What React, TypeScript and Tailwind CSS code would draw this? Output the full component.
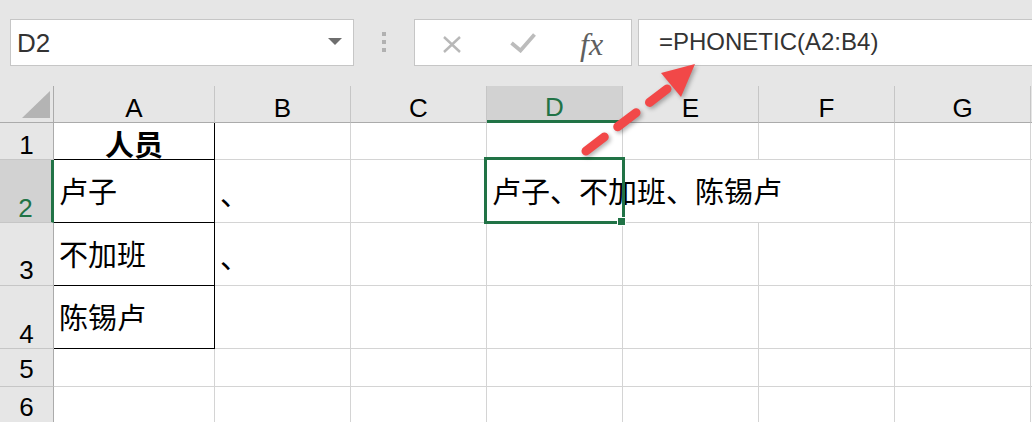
import React from "react";

const cols = [
  { id: "A", w: "w-[161px]" },
  { id: "B", w: "w-[136px]" },
  { id: "C", w: "w-[136px]" },
  { id: "D", w: "w-[136px]" },
  { id: "E", w: "w-[136px]" },
  { id: "F", w: "w-[136px]" },
  { id: "G", w: "w-[136px]" },
];

const rows = [
  { n: "1", h: "h-[37px]", num: "pb-[1px]" },
  { n: "2", h: "h-[63px]", num: "pb-[1px]" },
  { n: "3", h: "h-[63px]", num: "pb-[2px]" },
  { n: "4", h: "h-[63px]", num: "pb-[1px]" },
  { n: "5", h: "h-[38px]", num: "pb-[4px]" },
  { n: "6", h: "h-[37px]", num: "pb-[3px]" },
];

const data: Record<string, string> = {
  A1: "人员",
  A2: "卢子",
  A3: "不加班",
  A4: "陈锡卢",
  B2: "、",
  B3: "、",
  D2: "卢子、不加班、陈锡卢",
};

function BodyCell({ row, col }: { row: string; col: { id: string; w: string } }) {
  const key = col.id + row;
  const text = data[key];
  const boxed = col.id === "A" && Number(row) <= 4;
  const overflowed = row === "2" && (col.id === "D" || col.id === "E");

  let border = "border-r border-b border-[#d4d4d4]";
  if (boxed) border = "border-r border-b border-black";
  if (overflowed) border = "border-b border-[#d4d4d4]";

  let pad = "pl-[5px] pt-[19px]";
  if (key === "A1") pad = "pt-[9px] text-center font-bold";
  if (col.id === "B") pad = "pl-[5px] pt-[22px]";

  return (
    <div className={`relative shrink-0 ${col.w} ${border} ${pad}`}>
      {text && (
        <span className="block whitespace-nowrap text-[29px] leading-[29px] text-black">
          {text}
        </span>
      )}
      {key === "D2" && (
        <>
          <div className="absolute -left-[3px] -right-[2px] -top-[3px] -bottom-[2px] z-10 border-[3px] border-[#217346]" />
          <div className="absolute left-[130px] top-[57px] z-10 h-[9px] w-[9px] border border-white bg-[#217346]" />
        </>
      )}
    </div>
  );
}

export default function App() {
  return (
    <div className="relative h-[422px] w-[1032px] overflow-hidden bg-[#e6e6e6] font-['Liberation_Sans','Noto_Sans_CJK_SC',sans-serif]">
      {/* formula bar */}
      <div className="flex h-[86px] pl-[10px] pt-[19px]">
        <div className="flex h-[47px] w-[344px] shrink-0 items-start justify-between border border-[#c6c6c6] bg-white pl-[6px] pt-[10px]">
          <span className="text-[26px] leading-[26px] text-[#333]">D2</span>
          <svg width="14" height="8" viewBox="0 0 14 8" className="mr-[11px] mt-[8px]">
            <path d="M0 0 L14 0 L7 7 Z" fill="#6e6e6e" />
          </svg>
        </div>

        <div className="ml-[28px] mt-[13px] flex shrink-0 flex-col gap-[4px]">
          <div className="h-[4px] w-[4px] bg-[#b1b1b1]" />
          <div className="h-[4px] w-[4px] bg-[#b1b1b1]" />
          <div className="h-[4px] w-[4px] bg-[#b1b1b1]" />
        </div>

        <div className="ml-[28px] flex h-[47px] w-[218px] shrink-0 items-start border border-[#c6c6c6] bg-white pl-[27px]">
          <svg width="20" height="19" viewBox="0 0 20 19" className="mt-[15px]">
            <path d="M2 2 L18 17 M18 2 L2 17" stroke="#b8b8b8" strokeWidth="2.4" />
          </svg>
          <svg width="26" height="20" viewBox="0 0 26 20" className="ml-[48px] mt-[13px]">
            <path d="M1.5 10 L10.5 17.5 L24.5 1.5" stroke="#bcbcbc" strokeWidth="3.8" fill="none" />
          </svg>
          <span className="ml-[44px] mt-[8px] font-['Liberation_Serif',serif] text-[32px] italic leading-[32px] text-[#5f5f5f]">
            fx
          </span>
        </div>

        <div className="ml-[6px] h-[47px] w-[420px] shrink-0 border border-[#c6c6c6] bg-white pl-[20px] pt-[10px]">
          <span className="block text-[24px] leading-[24px] text-[#333]">=PHONETIC(A2:B4)</span>
        </div>
      </div>

      {/* column headers */}
      <div className="flex h-[37px]">
        <div className="relative w-[54px] shrink-0 border-r border-b border-r-[#ababab] border-b-[#ababab]">
          <svg width="54" height="37" className="absolute left-0 top-0">
            <path d="M22 32 L50 32 L50 5 Z" fill="#b4b4b4" />
          </svg>
        </div>
        {cols.map((c) =>
          c.id === "D" ? (
            <div
              key={c.id}
              className={`flex shrink-0 items-end justify-center ${c.w} border-r border-r-[#c6c6c6] border-b-[3px] border-b-[#217346] bg-[#d2d2d2] text-[26px] leading-[26px] text-[#217346]`}
            >
              {c.id}
            </div>
          ) : (
            <div
              key={c.id}
              className={`flex shrink-0 items-end justify-center ${c.w} border-r border-b border-r-[#c6c6c6] border-b-[#ababab] pb-[1px] text-[26px] leading-[26px] text-black`}
            >
              {c.id}
            </div>
          )
        )}
        <div className="w-[4px] shrink-0 border-b border-b-[#ababab]" />
      </div>

      {/* sheet */}
      <div className="bg-white">
        {rows.map((r) => (
          <div key={r.n} className={`flex ${r.h}`}>
            {r.n === "2" ? (
              <div
                className={`flex w-[54px] shrink-0 items-end justify-center border-r-[3px] border-b border-r-[#217346] border-b-[#c6c6c6] bg-[#d2d2d2] text-[26px] leading-[26px] text-[#217346] ${r.num}`}
              >
                {r.n}
              </div>
            ) : (
              <div
                className={`flex w-[54px] shrink-0 items-end justify-center border-r border-b border-r-[#ababab] border-b-[#c6c6c6] bg-[#e6e6e6] text-[26px] leading-[26px] text-black ${r.num}`}
              >
                {r.n}
              </div>
            )}
            {cols.map((c) => (
              <BodyCell key={c.id} row={r.n} col={c} />
            ))}
            <div className="w-[4px] shrink-0 border-b border-[#d4d4d4]" />
          </div>
        ))}
      </div>

      {/* callout arrow */}
      <svg
        width="1032"
        height="422"
        className="pointer-events-none absolute left-0 top-0 z-20 drop-shadow-[2px_2px_2px_rgba(0,0,0,0.3)]"
      >
        <line
          x1="586"
          y1="151"
          x2="667"
          y2="89"
          stroke="#f24848"
          strokeWidth="9"
          strokeLinecap="round"
          strokeDasharray="23 17"
        />
        <path d="M695 64 L661 73 L681 97 Z" fill="#f24848" />
      </svg>
    </div>
  );
}
